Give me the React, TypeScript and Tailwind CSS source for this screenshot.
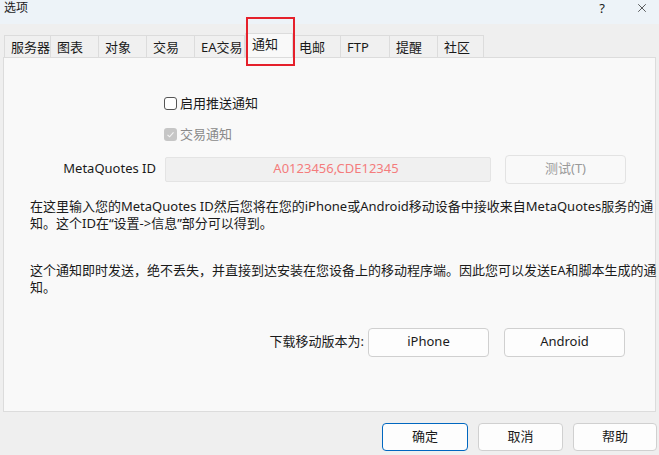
import { X } from "lucide-react";

const tabs = [
  { label: "服务器", w: "w-[47px]" },
  { label: "图表", w: "w-[48px]" },
  { label: "对象", w: "w-[48px]" },
  { label: "交易", w: "w-[48px]" },
  { label: "EA交易", w: "w-[50px]" },
  { label: "通知", w: "w-[48px]", active: true },
  { label: "电邮", w: "w-[48px]" },
  { label: "FTP", w: "w-[49px]" },
  { label: "提醒", w: "w-[48px]" },
  { label: "社区", w: "w-[46px]" },
];

export default function App() {
  return (
    <div className="relative w-[659px] h-[455px] overflow-hidden bg-[#efefef] text-[13px] text-[#1a1a1a] font-['Noto_Sans','Noto_Sans_CJK_SC',sans-serif] flex flex-col">
      {/* title bar */}
      <div className="h-[24px] bg-[#edf3f8] flex items-start justify-between pl-[4px] pr-[10px] pt-[0px]">
        <span className="text-[12px] leading-[16px]">选项</span>
        <div className="flex items-center gap-[30px] h-[16px]">
          <span className="text-[13px] leading-[16px]">?</span>
          <X size={14} strokeWidth={1.2} />
        </div>
      </div>

      {/* tabs */}
      <div className="flex pl-[4px] mt-[11px] h-[22px]">
        {tabs.map((t) =>
          t.active ? (
            <div
              key={t.label}
              className={`${t.w} h-[24px] -mt-[2px] pl-[6px] pt-[1px] bg-[#f9f9f9] border border-b-0 border-[#dcdcdc] relative z-10`}
            >
              {t.label}
            </div>
          ) : (
            <div
              key={t.label}
              className={`${t.w} h-[22px] pl-[6px] pt-[2px] bg-[#f0f0f0] border border-b-0 border-l-0 first:border-l border-[#dcdcdc]`}
            >
              {t.label}
            </div>
          )
        )}
      </div>

      {/* panel */}
      <div className="ml-[3px] w-[653px] h-[355px] bg-[#f9f9f9] border border-[#dcdcdc] flex flex-col">
        <div className="flex items-center ml-[160px] mt-[37px] h-[17px]">
          <span className="w-[13px] h-[13px] rounded-[3px] border border-[#555] bg-white" />
          <span className="ml-[3px]">启用推送通知</span>
        </div>
        <div className="flex items-center ml-[160px] mt-[14px] h-[17px] text-[#8a8a8a]">
          <span className="w-[13px] h-[13px] rounded-[3px] bg-[#c6c6c6] flex items-center justify-center">
            <svg width="9" height="9" viewBox="0 0 9 9" fill="none">
              <path d="M1.5 4.8 L3.6 6.8 L7.5 2.3" stroke="#f4f4f4" strokeWidth="1.1" />
            </svg>
          </span>
          <span className="ml-[3px]">交易通知</span>
        </div>

        <div className="flex items-center mt-[11px] h-[30px]">
          <span className="w-[152px] text-right">MetaQuotes ID</span>
          <div className="ml-[9px] w-[326px] h-[25px] bg-[#f0f0f0] border border-[#e4e4e4] rounded-[2px] flex items-center justify-center text-[#f47c7c] pl-[16px]">
            A0123456,CDE12345
          </div>
          <div className="ml-[14px] w-[121px] h-[29px] border border-[#e3e3e3] rounded-[4px] bg-[#f9f9f9] flex items-center justify-center text-[#9a9a9a]">
            测试(T)
          </div>
        </div>

        <p className="ml-[26px] mt-[14px] leading-[17px] whitespace-nowrap">
          在这里输入您的MetaQuotes ID然后您将在您的iPhone或Android移动设备中接收来自MetaQuotes服务的通
          <br />
          知。这个ID在“设置-&gt;信息”部分可以得到。
        </p>

        <p className="ml-[26px] mt-[30px] leading-[17px] whitespace-nowrap">
          这个通知即时发送，绝不丢失，并直接到达安装在您设备上的移动程序端。因此您可以发送EA和脚本生成的通
          <br />
          知。
        </p>

        <div className="flex items-center mt-[31px] h-[30px]">
          <span className="w-[360px] text-right">下载移动版本为:</span>
          <div className="ml-[4px] w-[121px] h-[29px] border border-[#d0d0d0] rounded-[4px] bg-[#fdfdfd] flex items-center justify-center">
            iPhone
          </div>
          <div className="ml-[15px] w-[121px] h-[29px] border border-[#d0d0d0] rounded-[4px] bg-[#fdfdfd] flex items-center justify-center">
            Android
          </div>
        </div>
      </div>

      {/* footer buttons */}
      <div className="flex justify-end gap-[10px] pr-[2px] mt-[11px]">
        <div className="w-[86px] h-[28px] border border-[#0067c0] rounded-[4px] bg-[#fdfdfd] flex items-center justify-center">
          确定
        </div>
        <div className="w-[85px] h-[28px] border border-[#d0d0d0] rounded-[4px] bg-[#fdfdfd] flex items-center justify-center">
          取消
        </div>
        <div className="w-[84px] h-[28px] border border-[#d0d0d0] rounded-[4px] bg-[#fdfdfd] flex items-center justify-center">
          帮助
        </div>
      </div>

      {/* red annotation box */}
      <div className="absolute left-[246px] top-[17px] w-[49px] h-[49px] border-2 border-[#e5202b] z-20" />
    </div>
  );
}
